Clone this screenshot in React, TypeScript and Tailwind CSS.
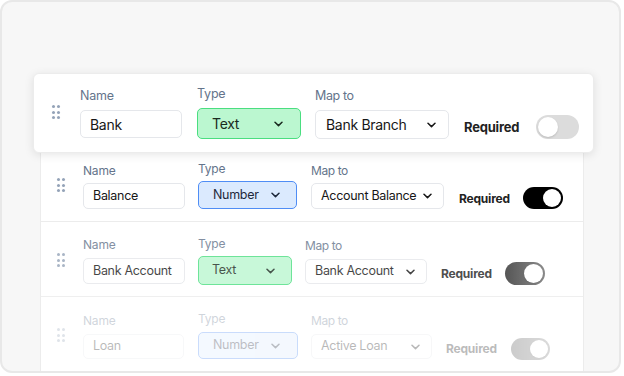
import React from 'react';

function Dots({ className = '' }: { className?: string }) {
  return (
    <div className={`grid shrink-0 grid-cols-2 gap-x-[2px] gap-y-[2.5px] ${className}`}>
      {Array.from({ length: 6 }).map((_, i) => (
        <span key={i} className="block h-[3px] w-[3px] rounded-full bg-[#94a3b8]" />
      ))}
    </div>
  );
}

function Chevron() {
  return (
    <svg width="9" height="6" viewBox="0 0 9 6" fill="none" className="shrink-0">
      <path d="M1 1.2l3.5 3.4L8 1.2" stroke="currentColor" strokeWidth="1.5" strokeLinecap="round" strokeLinejoin="round" />
    </svg>
  );
}

function Toggle({ on, className }: { on: boolean; className: string }) {
  return (
    <div className={`flex shrink-0 items-center rounded-full p-[2px] ${on ? 'justify-end' : 'justify-start'} ${className}`}>
      <span className="block aspect-square h-full rounded-full bg-white shadow-[0_1px_2px_rgba(0,0,0,0.15)]" />
    </div>
  );
}

export default function App() {
  return (
    <div className="h-[376px] w-[624px] bg-white font-['Inter',sans-serif]">
      <div className="h-[373px] w-[621px] overflow-hidden rounded-[12px] border-2 border-[#e8e8e8] bg-[#f7f7f7] pl-[31px] pt-[71px]">
        {/* Floating row */}
        <div className="relative z-10 flex h-[80px] w-[561px] items-start rounded-[6px] border border-[#ececec] bg-white shadow-[0_2px_10px_rgba(0,0,0,0.10)]">
          <Dots className="ml-[18px] mt-[31px]" />
          <div className="ml-[20px] mt-[14px] w-[102px]">
            <div className="text-[12.5px] leading-[16px] tracking-[-0.2px] text-[#64748b]">Name</div>
            <div className="mt-[6px] flex h-[28px] items-center whitespace-nowrap rounded-[5px] border border-[#e5e7eb] px-[9px] text-[14px] tracking-[-0.3px] text-[#171717]">Bank</div>
          </div>
          <div className="ml-[15px] mt-[12px] w-[104px]">
            <div className="text-[12.5px] leading-[16px] tracking-[-0.2px] text-[#64748b]">Type</div>
            <div className="mt-[6px] flex h-[31px] items-center justify-between whitespace-nowrap rounded-[5px] border-[1.5px] border-[#4ade80] bg-[#bbf7d0] pl-[14px] pr-[17px] text-[14px] tracking-[-0.3px] text-[#1a2b20]">
              Text
              <Chevron />
            </div>
          </div>
          <div className="ml-[14px] mt-[14px] w-[134px]">
            <div className="text-[12.5px] leading-[16px] tracking-[-0.4px] text-[#64748b]">Map to</div>
            <div className="mt-[6px] flex h-[29px] items-center justify-between whitespace-nowrap rounded-[5px] border border-[#e5e7eb] pl-[10px] pr-[12px] text-[14px] tracking-[-0.3px] text-[#171717]">
              Bank Branch
              <Chevron />
            </div>
          </div>
          <div className="ml-[15px] mt-[45px] w-[57px] whitespace-nowrap text-[13px] font-bold leading-[16px] tracking-[-0.2px] text-[#222]">Required</div>
          <Toggle on={false} className="ml-[15px] mt-[41px] h-[24px] w-[43px] bg-[#dcdcdc]" />
        </div>

        {/* List panel */}
        <div className="ml-[7px] w-[544px] border-x border-[#ececec] bg-white">
          {/* Row 2 */}
          <div className="flex h-[69px] items-start border-b border-[#ececec]">
            <Dots className="ml-[16px] mt-[25px]" />
            <div className="ml-[18px] mt-[10px] w-[102px]">
              <div className="text-[12px] leading-[15px] tracking-[-0.2px] text-[#64748b]">Name</div>
              <div className="mt-[5px] flex h-[26px] items-center whitespace-nowrap rounded-[5px] border border-[#e5e7eb] px-[9px] text-[12.5px] tracking-[-0.3px] text-[#171717]">Balance</div>
            </div>
            <div className="ml-[13px] mt-[8px] w-[99px]">
              <div className="text-[12px] leading-[15px] tracking-[-0.2px] text-[#64748b]">Type</div>
              <div className="mt-[5px] flex h-[28px] items-center justify-between whitespace-nowrap rounded-[5px] border-[1.5px] border-[#4f8df5] bg-[#dbeafe] pl-[14px] pr-[16px] text-[12.5px] tracking-[-0.3px] text-[#1e293b]">
                Number
                <Chevron />
              </div>
            </div>
            <div className="ml-[14px] mt-[10px] w-[133px]">
              <div className="text-[12px] leading-[15px] tracking-[-0.4px] text-[#64748b]">Map to</div>
              <div className="mt-[5px] flex h-[26px] items-center justify-between whitespace-nowrap rounded-[5px] border border-[#e5e7eb] pl-[9px] pr-[11px] text-[12.5px] tracking-[-0.3px] text-[#171717]">
                Account Balance
                <Chevron />
              </div>
            </div>
            <div className="ml-[15px] mt-[38px] w-[50px] whitespace-nowrap text-[12px] font-bold leading-[15px] tracking-[-0.2px] text-[#222]">Required</div>
            <Toggle on className="ml-[14px] mt-[34px] h-[22px] w-[40px] bg-black" />
          </div>

          {/* Row 3 */}
          <div className="flex h-[75px] items-start border-b border-[#ececec] opacity-80">
            <Dots className="ml-[16px] mt-[31px]" />
            <div className="ml-[18px] mt-[15px] w-[102px]">
              <div className="text-[12px] leading-[15px] tracking-[-0.2px] text-[#64748b]">Name</div>
              <div className="mt-[6px] flex h-[26px] items-center whitespace-nowrap rounded-[5px] border border-[#e5e7eb] px-[9px] text-[12.5px] tracking-[-0.3px] text-[#171717]">Bank Account</div>
            </div>
            <div className="ml-[13px] mt-[14px] w-[94px]">
              <div className="text-[12px] leading-[15px] tracking-[-0.2px] text-[#64748b]">Type</div>
              <div className="mt-[5px] flex h-[29px] items-center justify-between whitespace-nowrap rounded-[5px] border-[1.5px] border-[#4ade80] bg-[#bbf7d0] pl-[13px] pr-[16px] text-[12.5px] tracking-[-0.3px] text-[#1a2b20]">
                Text
                <Chevron />
              </div>
            </div>
            <div className="ml-[13px] mt-[16px] w-[122px]">
              <div className="text-[12px] leading-[15px] tracking-[-0.4px] text-[#64748b]">Map to</div>
              <div className="mt-[6px] flex h-[25px] items-center justify-between whitespace-nowrap rounded-[5px] border border-[#e5e7eb] pl-[9px] pr-[11px] text-[12.5px] tracking-[-0.3px] text-[#171717]">
                Bank Account
                <Chevron />
              </div>
            </div>
            <div className="ml-[14px] mt-[44px] w-[51px] whitespace-nowrap text-[12px] font-bold leading-[15px] tracking-[-0.2px] text-[#222]">Required</div>
            <Toggle on className="ml-[13px] mt-[40px] h-[23px] w-[40px] bg-gradient-to-r from-[#2c2c2c] to-[#707070]" />
          </div>

          {/* Row 4 */}
          <div className="flex h-[76px] items-start opacity-30">
            <Dots className="ml-[16px] mt-[31px]" />
            <div className="ml-[18px] mt-[16px] w-[101px]">
              <div className="text-[12px] leading-[15px] tracking-[-0.2px] text-[#64748b]">Name</div>
              <div className="mt-[6px] flex h-[25px] items-center whitespace-nowrap rounded-[5px] border border-[#e5e7eb] px-[9px] text-[12.5px] tracking-[-0.3px] text-[#171717]">Loan</div>
            </div>
            <div className="ml-[14px] mt-[14px] w-[100px]">
              <div className="text-[12px] leading-[15px] tracking-[-0.2px] text-[#64748b]">Type</div>
              <div className="mt-[6px] flex h-[27px] items-center justify-between whitespace-nowrap rounded-[5px] border-[1.5px] border-[#4f8df5] bg-[#dbeafe] pl-[14px] pr-[17px] text-[12.5px] tracking-[-0.3px] text-[#1e293b]">
                Number
                <Chevron />
              </div>
            </div>
            <div className="ml-[13px] mt-[16px] w-[121px]">
              <div className="text-[12px] leading-[15px] tracking-[-0.4px] text-[#64748b]">Map to</div>
              <div className="mt-[6px] flex h-[25px] items-center justify-between whitespace-nowrap rounded-[5px] border border-[#e5e7eb] pl-[9px] pr-[11px] text-[12.5px] tracking-[-0.3px] text-[#171717]">
                Active Loan
                <Chevron />
              </div>
            </div>
            <div className="ml-[14px] mt-[44px] w-[51px] whitespace-nowrap text-[12px] font-bold leading-[15px] tracking-[-0.2px] text-[#222]">Required</div>
            <Toggle on className="ml-[14px] mt-[41px] h-[22px] w-[39px] bg-gradient-to-r from-[#555] to-[#888]" />
          </div>
        </div>
      </div>
    </div>
  );
}
